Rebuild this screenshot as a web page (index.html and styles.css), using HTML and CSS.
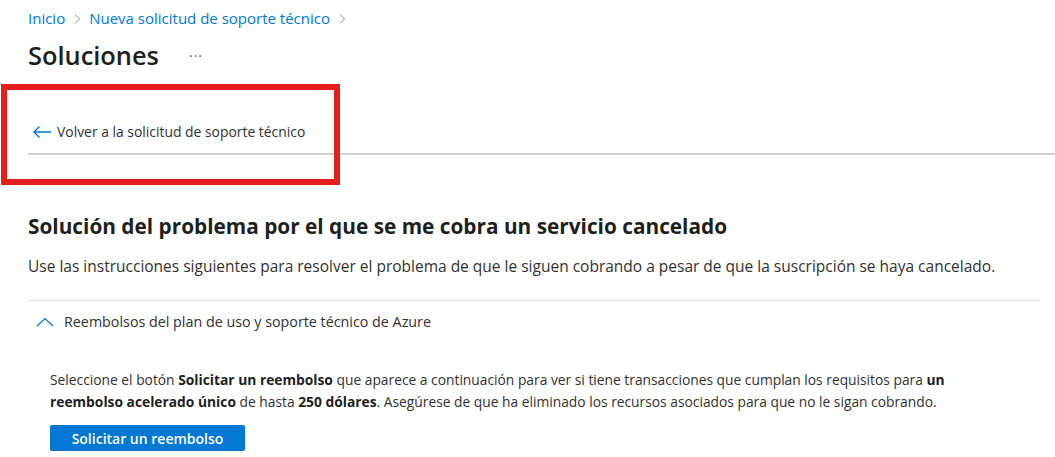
FILE: index.html
```html
<!DOCTYPE html>
<html lang="es">
<head>
    <meta charset="UTF-8">
    <meta name="viewport" content="width=device-width, initial-scale=1.0">
    <title>Soluciones</title>
    <link rel="stylesheet" href="styles.css">
</head>
<body>
    <nav class="breadcrumb">
        <a href="#">Inicio</a>
        <svg class="crumb-sep" width="8" height="12" viewBox="0 0 8 12"><path d="M2 1.5 L6.5 6 L2 10.5" fill="none" stroke="#8a8886" stroke-width="1"/></svg>
        <a href="#">Nueva solicitud de soporte técnico</a>
        <svg class="crumb-sep" width="8" height="12" viewBox="0 0 8 12"><path d="M2 1.5 L6.5 6 L2 10.5" fill="none" stroke="#8a8886" stroke-width="1"/></svg>
    </nav>

    <div class="title-row">
        <h1>Soluciones</h1>
        <span class="more">···</span>
    </div>

    <div class="back-bar">
        <a href="#" class="back-link">
            <svg width="20" height="14" viewBox="0 0 20 14"><path d="M19 7 H2 M7.5 1.5 L2 7 L7.5 12.5" fill="none" stroke="#0078d4" stroke-width="1.4"/></svg>
            <span>Volver a la solicitud de soporte técnico</span>
        </a>
    </div>

    <main class="content">
        <h2>Solución del problema por el que se me cobra un servicio cancelado</h2>
        <p class="intro">Use las instrucciones siguientes para resolver el problema de que le siguen cobrando a pesar de que la suscripción se haya cancelado.</p>

        <section class="accordion">
            <div class="acc-header">
                <svg width="18" height="10" viewBox="0 0 18 10"><path d="M1 9 L9 1.5 L17 9" fill="none" stroke="#0078d4" stroke-width="1.2"/></svg>
                <span>Reembolsos del plan de uso y soporte técnico de Azure</span>
            </div>
            <div class="acc-body">
                <p>Seleccione el botón <b>Solicitar un reembolso</b> que aparece a continuación para ver si tiene transacciones que cumplan los requisitos para <b>un reembolso acelerado único</b> de hasta <b>250 dólares</b>. Asegúrese de que ha eliminado los recursos asociados para que no le sigan cobrando.</p>
                <button type="button" class="primary">Solicitar un reembolso</button>
            </div>
        </section>
    </main>

    <div class="highlight"></div>
</body>
</html>
```

FILE: styles.css
```css
body {
    margin: 0;
    font-family: "Open Sans", "Noto Sans", sans-serif;
    font-size: 14px;
    color: #323130;
    background: #fff;
    position: relative;
}
a {
    text-decoration: none;
}
.breadcrumb {
    display: flex;
    align-items: center;
    gap: 8px;
    padding: 8px 0 0 28px;
    height: 20px;
    line-height: 20px;
    font-size: 15px;
}
.breadcrumb a {
    color: #0078d4;
}
.crumb-sep {
    margin-top: 1px;
}
.title-row {
    display: flex;
    align-items: center;
    padding: 11px 0 0 28px;
    height: 32px;
}
h1 {
    margin: 0;
    font-size: 25.4px;
    font-weight: 600;
    line-height: 32px;
    color: #201f1e;
}
.more {
    margin-left: 30px;
    color: #605e5c;
    font-size: 14px;
    letter-spacing: 1px;
}
.back-bar {
    margin: 51px 0 0 28px;
    border-bottom: 2px solid #d2d0ce;
    padding-bottom: 11px;
}
.back-link {
    display: flex;
    align-items: center;
    gap: 5px;
    padding-left: 4px;
    color: #323130;
    line-height: 20px;
    font-size: 13.9px;
}
.content {
    padding: 0 15px 0 28px;
}
h2 {
    margin: 57px 0 0;
    font-size: 20.8px;
    font-weight: 700;
    line-height: 28px;
    color: #201f1e;
}
.intro {
    margin: 16px 0 0;
    line-height: 20px;
    font-size: 15.5px;
}
.accordion {
    margin-top: 24px;
    border-top: 1px solid #e1dfdd;
}
.acc-header {
    display: flex;
    align-items: center;
    gap: 10px;
    padding: 11px 0 0 8px;
    line-height: 20px;
    font-size: 14.3px;
}
.acc-body {
    padding: 37px 0 0 22px;
}
.acc-body p {
    margin: 0;
    max-width: 905px;
    line-height: 22px;
    font-size: 13.8px;
}
.acc-body b {
    font-weight: 700;
    color: #201f1e;
}
.primary {
    display: block;
    margin-top: 12px;
    width: 195px;
    height: 26px;
    background-color: #0078d4;
    color: white;
    border: none;
    border-radius: 2px;
    font-family: inherit;
    font-size: 14px;
    font-weight: 600;
    padding: 0;
}
.highlight {
    position: absolute;
    left: 1px;
    top: 84px;
    width: 327px;
    height: 89px;
    border: 6px solid #e51e1e;
}
```
